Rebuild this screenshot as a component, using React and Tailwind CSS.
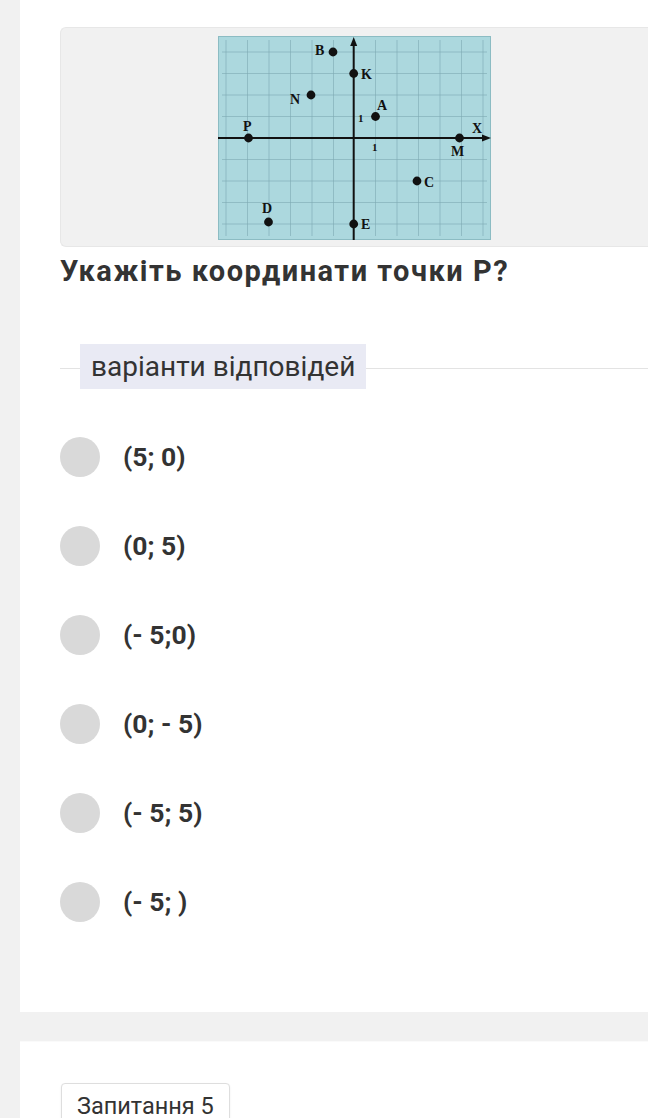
import React from 'react';

const OPTIONS = ['(5; 0)', '(0; 5)', '(- 5;0)', '(0; - 5)', '(- 5; 5)', '(- 5; )'];

// grid coordinates inside the 273x204 picture
const GRID_X = [8, 29.5, 51, 72.5, 94, 115.5, 157.5, 179, 200.5, 222, 243.5, 265];
const GRID_Y = [16, 37.5, 59, 80.5, 123.5, 145, 166.5, 188];

const POINTS = [
  { x: 115, y: 16, label: 'B', lx: 97, ly: 19 },
  { x: 135.7, y: 37.5, label: 'K', lx: 143, ly: 43 },
  { x: 93, y: 59, label: 'N', lx: 72, ly: 68 },
  { x: 157.5, y: 80.5, label: 'A', lx: 159, ly: 74 },
  { x: 30.5, y: 102, label: 'P', lx: 25, ly: 95 },
  { x: 241.5, y: 102, label: 'M', lx: 233, ly: 120 },
  { x: 199, y: 145, label: 'C', lx: 206, ly: 151 },
  { x: 50.5, y: 186, label: 'D', lx: 44, ly: 177 },
  { x: 135.7, y: 188, label: 'E', lx: 143, ly: 193 },
];

const CoordinatePlane = () => (
  <svg width="273" height="204" viewBox="0 0 273 204" className="block">
    <rect x="0.5" y="0.5" width="272" height="203" fill="#acd8de" stroke="#8cbcc3" />
    {GRID_X.map((x) => (
      <line key={`v${x}`} x1={x} y1="4" x2={x} y2="200" stroke="#7eaab1" strokeWidth="0.6" />
    ))}
    {GRID_Y.map((y) => (
      <line key={`h${y}`} x1="4" y1={y} x2="269" y2={y} stroke="#7eaab1" strokeWidth="0.6" />
    ))}
    <line x1="0" y1="102" x2="268" y2="102" stroke="#111" strokeWidth="2" />
    <polygon points="273,102 264,98.5 264,105.5" fill="#111" />
    <line x1="135.7" y1="204" x2="135.7" y2="6" stroke="#111" strokeWidth="2" />
    <polygon points="135.7,1 132.2,10 139.2,10" fill="#111" />
    {POINTS.map((p) => (
      <circle key={p.label} cx={p.x} cy={p.y} r="4.4" fill="#111" />
    ))}
    <g fontFamily="'Liberation Serif', serif" fontWeight="700" fontSize="14" fill="#111">
      {POINTS.map((p) => (
        <text key={p.label} x={p.lx} y={p.ly}>{p.label}</text>
      ))}
      <text x="254" y="97">X</text>
      <text x="140" y="86" fontSize="11">1</text>
      <text x="154" y="115" fontSize="11">1</text>
    </g>
  </svg>
);

const App = () => {
  return (
    <div className="h-[1118px] overflow-hidden bg-[#f1f1f1] pl-[20px] font-['Roboto',sans-serif]">
      <div className="h-[1012px] bg-white pl-[40px] pt-[27px]">
        <div className="h-[220px] rounded-l-[6px] border border-r-0 border-[#e7e7e7] bg-[#f1f1f1] pl-[157px] pt-[8px]">
          <CoordinatePlane />
        </div>

        <h2 className="mt-[6px] text-[29px] font-bold leading-[36px] tracking-[1.5px] text-[#333]">
          Укажіть координати точки Р?
        </h2>

        <div className="relative mt-[55px] flex h-[45px] items-center">
          <div className="absolute left-0 right-0 top-[24px] h-px bg-[#e3e3e3]" />
          <span className="relative ml-[20px] flex h-[45px] items-center bg-[#e9eaf4] px-[11px] text-[28px] text-[#333]">
            варіанти відповідей
          </span>
        </div>

        <div className="mt-[48px] flex flex-col gap-[49px]">
          {OPTIONS.map((opt) => (
            <label key={opt} className="flex h-[40px] items-center gap-[23px]">
              <span className="h-[40px] w-[40px] rounded-full bg-[#d9d9d9]" />
              <span className="text-[26.5px] font-bold text-[#333]">{opt}</span>
            </label>
          ))}
        </div>
      </div>

      <div className="mt-[29px] h-[100px] border-t border-[#fafafa] bg-white pl-[41px] pt-[41px]">
        <button
          type="button"
          className="rounded-[4px] border border-[#dedede] bg-white px-[15px] pt-[8px] pb-[10px] text-[23.5px] leading-[28px] text-[#333] shadow-[0_1px_2px_rgba(0,0,0,0.08)]"
        >
          Запитання 5
        </button>
      </div>
    </div>
  );
};

export default App;
